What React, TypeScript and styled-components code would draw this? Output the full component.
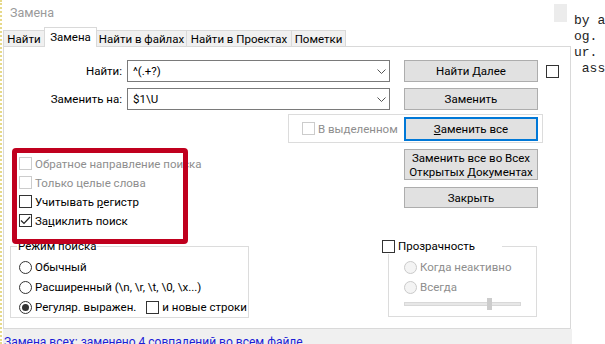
import React from 'react';
import styled, { createGlobalStyle } from 'styled-components';

const GlobalStyle = createGlobalStyle`
  html, body { margin: 0; padding: 0; background: #fff; }
  body {
    font-family: 'Segoe UI', Roboto, 'Noto Sans', sans-serif;
    font-size: 11.5px;
    color: #000;
  }
  * { box-sizing: border-box; }
`;

const Screen = styled.div`
  display: flex;
  width: 605px;
  height: 344px;
  overflow: hidden;
  background: #fff;
`;

const Dialog = styled.div`
  width: 572px;
  flex: none;
  display: flex;
  flex-direction: column;
  border-left: 2px dotted #e6d98a;
`;

const TitleBar = styled.div`
  height: 27px;
  display: flex;
  align-items: flex-start;
  padding-left: 8px;
`;

const Title = styled.div`
  line-height: 25px;
  font-size: 12.5px;
  color: #9a9a9a;
`;

const CloseBox = styled.div`
  margin-left: auto;
  margin-right: 5px;
  margin-top: 4px;
  width: 13px;
  height: 18px;
  background: #ececec;
`;

const TabStrip = styled.div`
  display: flex;
  align-items: flex-start;
  height: 20px;
  margin-left: 1px;
  margin-bottom: -1px;
  position: relative;
  z-index: 1;
`;

const Tab = styled.div<{ $w: number; $active?: boolean }>`
  width: ${(p) => p.$w}px;
  height: ${(p) => (p.$active ? 20 : 16)}px;
  margin-top: ${(p) => (p.$active ? 0 : 3)}px;
  margin-right: -1px;
  display: flex;
  align-items: center;
  justify-content: center;
  border: 1px solid #d9d9d9;
  border-bottom: none;
  background: ${(p) => (p.$active ? '#fff' : '#f0f0f0')};
  position: relative;
  z-index: ${(p) => (p.$active ? 2 : 1)};
  white-space: nowrap;
  padding-bottom: ${(p) => (p.$active ? 2 : 0)}px;
`;

const Panel = styled.div`
  position: relative;
  margin-left: 1px;
  width: 568px;
  height: 283px;
  border: 1px solid #d9d9d9;
  display: flex;
  flex-direction: column;
  padding-top: 13px;
`;

const FormRow = styled.div<{ $top: number }>`
  display: flex;
  align-items: center;
  height: 22px;
  margin-top: ${(p) => p.$top}px;
`;

const FieldLabel = styled.label`
  width: 118px;
  margin-right: 5px;
  text-align: right;
  white-space: nowrap;
`;

const Combo = styled.div`
  width: 263px;
  height: 22px;
  margin-right: 14px;
  border: 1px solid #7a7a7a;
  background: #fff;
  display: flex;
  align-items: center;
  justify-content: space-between;
  padding: 0 3px 0 5px;
`;

const Button = styled.button<{ $h: number; $default?: boolean }>`
  width: 134px;
  height: ${(p) => p.$h}px;
  flex: none;
  margin: 0;
  padding: 0;
  font: inherit;
  line-height: 14px;
  color: #000;
  background: #e1e1e1;
  border: ${(p) => (p.$default ? '2px solid #0078d7' : '1px solid #adadad')};
  text-align: center;
`;

const SelectionGroup = styled.div`
  margin-top: 4px;
  margin-left: 284px;
  width: 255px;
  height: 29px;
  border: 1px solid #dcdcdc;
  display: flex;
  align-items: center;
  padding: 0 4px 0 13px;
  & > button {
    margin-left: auto;
  }
`;

const CheckRow = styled.label<{ $disabled?: boolean; $h?: number }>`
  display: flex;
  align-items: center;
  gap: 3px;
  height: ${(p) => p.$h ?? 19}px;
  white-space: nowrap;
  color: ${(p) => (p.$disabled ? '#8e8e8e' : '#000')};
`;

const Box = styled.span<{ $disabled?: boolean }>`
  width: 13px;
  height: 13px;
  flex: none;
  border: 1px solid ${(p) => (p.$disabled ? '#cccccc' : '#333333')};
  background: #fff;
  display: flex;
  align-items: center;
  justify-content: center;
`;

const RadioDot = styled.span<{ $disabled?: boolean; $on?: boolean }>`
  width: 13px;
  height: 13px;
  flex: none;
  border-radius: 50%;
  border: 1px solid ${(p) => (p.$disabled ? '#cacaca' : '#333333')};
  background: ${(p) => (p.$disabled ? '#f4f4f4' : '#fff')};
  position: relative;
  &::after {
    content: '';
    display: ${(p) => (p.$on ? 'block' : 'none')};
    position: absolute;
    inset: 2px;
    border-radius: 50%;
    background: #333;
  }
`;

const Lower = styled.div`
  display: flex;
  margin-top: 5px;
  margin-left: 6px;
`;

const LeftCol = styled.div`
  width: 239px;
  display: flex;
  flex-direction: column;
`;

const Options = styled.div`
  display: flex;
  flex-direction: column;
  padding: 6px 0 0 9px;
`;

const Group = styled.fieldset<{ $w: number; $top: number; $left?: number; $pl: number; $pb?: number }>`
  width: ${(p) => p.$w}px;
  min-width: 0;
  margin: ${(p) => p.$top}px 0 0 ${(p) => p.$left ?? 0}px;
  padding: 3px 0 ${(p) => p.$pb ?? 0}px ${(p) => p.$pl}px;
  border: 1px solid #dcdcdc;
`;

const Legend = styled.legend<{ $ml: number; $w?: number }>`
  padding: 0 1px;
  margin-left: ${(p) => p.$ml}px;
  line-height: 15px;
  height: 15px;
  width: ${(p) => (p.$w ? `${p.$w}px` : 'auto')};
  display: flex;
  align-items: center;
  gap: 3px;
  white-space: nowrap;
`;

const RadioRow = styled.div`
  display: flex;
  align-items: center;
  height: 20px;
  white-space: nowrap;
`;

const RadioLabel = styled.label<{ $disabled?: boolean }>`
  display: flex;
  align-items: center;
  gap: 3px;
  color: ${(p) => (p.$disabled ? '#8e8e8e' : '#000')};
`;

const NewLines = styled(CheckRow)`
  margin-left: 10px;
`;

const RightCol = styled.div`
  margin-left: 133px;
  width: 156px;
  display: flex;
  flex-direction: column;
  & > button {
    margin-left: 22px;
  }
`;

const SliderRow = styled.div`
  position: relative;
  height: 14px;
  width: 117px;
  display: flex;
  align-items: center;
`;

const Track = styled.div`
  width: 117px;
  height: 4px;
  background: #e7e7e7;
  border: 1px solid #d8d8d8;
`;

const Thumb = styled.div<{ $x: number }>`
  position: absolute;
  left: ${(p) => p.$x}px;
  top: 1px;
  width: 5px;
  height: 12px;
  background: #cccccc;
`;

const Highlight = styled.div`
  position: absolute;
  left: 8px;
  top: 101px;
  width: 176px;
  height: 96px;
  border: 5px solid #c0001e;
  border-radius: 4px;
  pointer-events: none;
`;

const StatusBar = styled.div`
  flex: 1;
  margin-left: 1px;
  background: #f0f0f0;
  padding: 6px 0 0 1px;
  line-height: 15px;
  font-size: 12px;
  color: #1c1cd6;
  white-space: nowrap;
  overflow: hidden;
`;

const Editor = styled.div`
  flex: 1;
  padding: 13px 0 0 2px;
  font-family: 'Liberation Mono', monospace;
  font-size: 13px;
  line-height: 16px;
  color: #222;
  white-space: pre;
  overflow: hidden;
`;

const Chevron = () => (
  <svg width="9" height="5" viewBox="0 0 9 5">
    <polyline points="0.5,0.5 4.5,4.5 8.5,0.5" fill="none" stroke="#555" strokeWidth="1" />
  </svg>
);

const Tick = () => (
  <svg width="11" height="9" viewBox="0 0 11 9">
    <polyline points="1,4.5 4,7.5 10,1" fill="none" stroke="#222" strokeWidth="1.2" />
  </svg>
);

const Check = ({ checked, disabled, children, h }: { checked?: boolean; disabled?: boolean; children: React.ReactNode; h?: number }) => (
  <CheckRow $disabled={disabled} $h={h}>
    <Box $disabled={disabled}>{checked && <Tick />}</Box>
    <span>{children}</span>
  </CheckRow>
);

const Radio = ({ on, disabled, children }: { on?: boolean; disabled?: boolean; children: React.ReactNode }) => (
  <RadioLabel $disabled={disabled}>
    <RadioDot $on={on} $disabled={disabled} />
    <span>{children}</span>
  </RadioLabel>
);

const tabs = [
  { title: 'Найти', w: 42 },
  { title: 'Замена', w: 53, active: true },
  { title: 'Найти в файлах', w: 91 },
  { title: 'Найти в Проектах', w: 106 },
  { title: 'Пометки', w: 55 },
];

const editorLines = ['by a', 'og.', 'ur.', ' ass'];

export default function App() {
  return (
    <>
      <GlobalStyle />
      <Screen>
        <Dialog>
          <TitleBar>
            <Title>Замена</Title>
            <CloseBox />
          </TitleBar>
          <TabStrip>
            {tabs.map((t) => (
              <Tab key={t.title} $w={t.w} $active={t.active}>
                {t.title}
              </Tab>
            ))}
          </TabStrip>
          <Panel>
            <FormRow $top={0}>
              <FieldLabel>Найти:</FieldLabel>
              <Combo>
                <span>^(.+?)</span>
                <Chevron />
              </Combo>
              <Button $h={22}>Найти Далее</Button>
              <Box style={{ marginLeft: 8 }} />
            </FormRow>
            <FormRow $top={6}>
              <FieldLabel>Заменить на:</FieldLabel>
              <Combo>
                <span>$1\U</span>
                <Chevron />
              </Combo>
              <Button $h={22}>Заменить</Button>
            </FormRow>
            <SelectionGroup>
              <Check disabled h={27}>В выделенном</Check>
              <Button $h={24} $default>
                <u>З</u>аменить все
              </Button>
            </SelectionGroup>
            <Lower>
              <LeftCol>
                <Options>
                  <Check disabled>Обратное направление поиска</Check>
                  <Check disabled>Только целые слова</Check>
                  <Check>
                    Учитывать <u>р</u>егистр
                  </Check>
                  <Check checked>
                    За<u>ц</u>иклить поиск
                  </Check>
                </Options>
                <Group $w={239} $top={9} $pl={8}>
                  <Legend $ml={-2}>Режим поиска</Legend>
                  <RadioRow>
                    <Radio>Обычный</Radio>
                  </RadioRow>
                  <RadioRow>
                    <Radio>Расширенный (\n, \r, \t, \0, \x...)</Radio>
                  </RadioRow>
                  <RadioRow>
                    <Radio on>Регуляр. выражен.</Radio>
                    <NewLines $h={20}>
                      <Box />
                      <span>и новые строки</span>
                    </NewLines>
                  </RadioRow>
                </Group>
              </LeftCol>
              <RightCol>
                <Button $h={31} style={{ marginTop: 1 }}>
                  Заменить все во Всех
                  <br />
                  Открытых <u>Д</u>окументах
                </Button>
                <Button $h={21} style={{ marginTop: 7 }}>
                  Закрыть
                </Button>
                <Group $w={149} $top={31} $left={6} $pl={15} $pb={5}>
                  <Legend $ml={-23} $w={121}>
                    <Box />
                    <span>Прозрачность</span>
                  </Legend>
                  <RadioRow>
                    <Radio disabled>Когда неактивно</Radio>
                  </RadioRow>
                  <RadioRow>
                    <Radio disabled>Всегда</Radio>
                  </RadioRow>
                  <SliderRow>
                    <Track />
                    <Thumb $x={83} />
                  </SliderRow>
                </Group>
              </RightCol>
            </Lower>
            <Highlight />
          </Panel>
          <StatusBar>Замена всех: заменено 4 совпадений во всем файле</StatusBar>
        </Dialog>
        <Editor>{editorLines.join('\n')}</Editor>
      </Screen>
    </>
  );
}
